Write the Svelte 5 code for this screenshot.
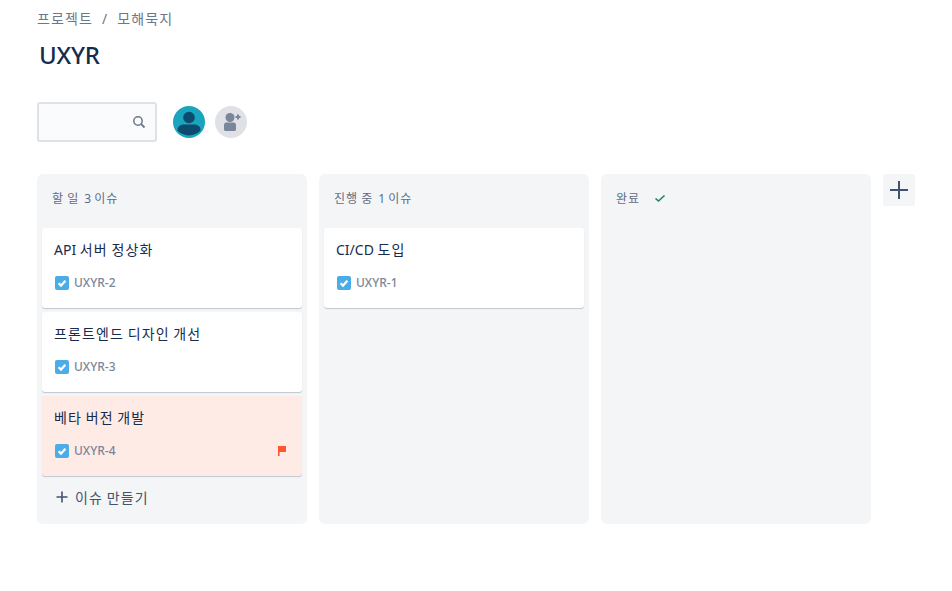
<script lang="ts">
  interface Issue {
    title: string
    key: string
    flagged?: boolean
  }

  interface Column {
    name: string
    count?: string
    done?: boolean
    create?: boolean
    issues: Issue[]
  }

  const columns: Column[] = [
    {
      name: '할 일',
      count: '3 이슈',
      create: true,
      issues: [
        { title: 'API 서버 정상화', key: 'UXYR-2' },
        { title: '프론트엔드 디자인 개선', key: 'UXYR-3' },
        { title: '베타 버전 개발', key: 'UXYR-4', flagged: true }
      ]
    },
    {
      name: '진행 중',
      count: '1 이슈',
      issues: [{ title: 'CI/CD 도입', key: 'UXYR-1' }]
    },
    { name: '완료', done: true, issues: [] }
  ]

  // hangul runs get their own span, the installed CJK face sets them tighter
  const runs = (text: string) => text.match(/[\uac00-\ud7a3]+|[^\uac00-\ud7a3]+/g) ?? []
  const isHangul = (run: string) => /[\uac00-\ud7a3]/.test(run)
</script>

{#snippet label(text: string)}
  {#each runs(text) as run}
    {#if isHangul(run)}<span class="ko">{run}</span>{:else}{run}{/if}
  {/each}
{/snippet}

<div class="page">
  <nav class="crumbs">
    <span>{@render label('프로젝트')}</span>
    <span class="sep">/</span>
    <span>{@render label('모해묵지')}</span>
  </nav>
  <h1>UXYR</h1>

  <div class="toolbar">
    <div class="search">
      <svg width="16" height="16" viewBox="0 0 16 16" fill="none" stroke="#6b778c" stroke-width="1.5">
        <circle cx="7" cy="7" r="4.2" />
        <path d="M10.2 10.2 L13.5 13.5" stroke-width="1.8" />
      </svg>
    </div>
    <div class="avatars">
      <svg class="avatar" width="32" height="32" viewBox="0 0 32 32">
        <circle cx="16" cy="16" r="16" fill="#19a5bd" />
        <circle cx="16" cy="11.5" r="5.8" fill="#0c4a6e" />
        <path d="M4.5 24 C4.5 20 8 18.5 11 18.5 H21 C24 18.5 27.5 20 27.5 24 V24.5 A16 16 0 0 1 4.5 24.5 Z" fill="#0c4a6e" />
      </svg>
      <svg class="avatar" width="32" height="32" viewBox="0 0 32 32">
        <circle cx="16" cy="16" r="16" fill="#dfe1e6" />
        <circle cx="15" cy="11.5" r="4.5" fill="#7a869a" />
        <path d="M9 19 C9 17 10.5 16.5 12 16.5 H18 C19.5 16.5 21 17 21 19 V23.5 C21 24.5 20 25 19 25 H11 C10 25 9 24.5 9 23.5 Z" fill="#7a869a" />
        <path d="M23 8.5 V13.5 M20.5 11 H25.5" stroke="#7a869a" stroke-width="2" fill="none" />
      </svg>
    </div>
  </div>

  <div class="board">
    {#each columns as column}
      <section class="column">
        <header class="column-head">
          <span>{@render label(column.name)}</span>
          {#if column.count}
            <span>{@render label(column.count)}</span>
          {/if}
          {#if column.done}
            <svg class="done" width="12" height="12" viewBox="0 0 12 12" fill="none" stroke="#1f845a" stroke-width="1.6">
              <path d="M1.5 6.5 L4.5 9 L10.5 3.5" />
            </svg>
          {/if}
        </header>
        <div class="cards">
          {#each column.issues as issue}
            <article class="card" class:flagged={issue.flagged}>
              <p class="title">{@render label(issue.title)}</p>
              <div class="meta">
                <svg width="14" height="14" viewBox="0 0 14 14">
                  <rect width="14" height="14" rx="2" fill="#4bade8" />
                  <path d="M3.6 7.2 L6 9.6 L10.4 4.8" fill="none" stroke="#fff" stroke-width="2.2" />
                </svg>
                <span class="key">{issue.key}</span>
                {#if issue.flagged}
                  <svg class="flag" width="10" height="12" viewBox="0 0 10 12">
                    <path d="M1 1 H9 V7 H2.6 V11 H1 Z" fill="#ff5630" />
                  </svg>
                {/if}
              </div>
            </article>
          {/each}
        </div>
        {#if column.create}
          <button class="create">
            <svg width="14" height="14" viewBox="0 0 14 14" stroke="#42526e" stroke-width="1.6">
              <path d="M7 1.5 V12.5 M1.5 7 H12.5" />
            </svg>
            <span>{@render label('이슈 만들기')}</span>
          </button>
        {/if}
      </section>
    {/each}
    <button class="add-column" aria-label="칼럼 추가">
      <svg width="20" height="20" viewBox="0 0 20 20" stroke="#42526e" stroke-width="2">
        <path d="M10 1 V19 M1 10 H19" />
      </svg>
    </button>
  </div>
</div>

<style>
  :global(body) {
    font-family: 'Noto Sans', 'Noto Sans CJK KR', sans-serif;
    color: #172b4d;
    background: #fff;
  }

  .page {
    padding: 8px 37px 0;
  }

  .crumbs {
    display: flex;
    gap: 8px;
    font-size: 14px;
    line-height: 22px;
    color: #6b778c;
  }

  .sep {
    margin: 0 2px 0 1px;
  }

  .ko {
    letter-spacing: 0.08em;
  }

  h1 {
    margin: 5px 0 0 2px;
    font-size: 24px;
    line-height: 40px;
    font-weight: 500;
    letter-spacing: -0.01em;
  }

  .toolbar {
    display: flex;
    align-items: center;
    gap: 16px;
    margin-top: 27px;
  }

  .search {
    box-sizing: border-box;
    width: 120px;
    height: 40px;
    display: flex;
    align-items: center;
    justify-content: flex-end;
    padding-right: 8px;
    background: #fafbfc;
    border: 2px solid #dfe1e6;
    border-radius: 3px;
  }

  .avatars {
    display: flex;
    gap: 10px;
  }

  .avatar {
    display: block;
  }

  .board {
    display: flex;
    align-items: flex-start;
    gap: 12px;
    margin-top: 32px;
  }

  .column {
    box-sizing: border-box;
    width: 270px;
    height: 350px;
    padding: 0 5px;
    background: #f4f5f7;
    border-radius: 6px;
  }

  .column-head {
    box-sizing: border-box;
    display: flex;
    align-items: center;
    gap: 5px;
    height: 54px;
    padding: 0 0 6px 10px;
    font-size: 12px;
    color: #5e6c84;
  }

  .done {
    margin-left: 9px;
  }

  .cards {
    display: flex;
    flex-direction: column;
    gap: 4px;
  }

  .card {
    box-sizing: border-box;
    height: 80px;
    padding: 11px 12px 0;
    background: #fff;
    border-radius: 3px;
    box-shadow: 0 1px 1px #c1c7d0;
  }

  .card.flagged {
    background: #ffebe6;
  }

  .title {
    margin: 0;
    font-size: 14px;
    line-height: 22px;
    color: #172b4d;
  }

  .meta {
    display: flex;
    align-items: center;
    gap: 5px;
    margin-top: 13px;
    padding-left: 1px;
  }

  .key {
    font-size: 12px;
    font-weight: 500;
    color: #7a869a;
  }

  .flag {
    margin-left: auto;
    margin-right: 3px;
  }

  .create {
    display: flex;
    align-items: center;
    gap: 6px;
    margin-top: 3px;
    padding: 8px 13px;
    border: 0;
    background: none;
    font: inherit;
    font-size: 14px;
    color: #42526e;
  }

  .add-column {
    width: 32px;
    height: 32px;
    padding: 0;
    display: flex;
    align-items: center;
    justify-content: center;
    border: 0;
    border-radius: 3px;
    background: #f4f5f7;
  }
</style>
